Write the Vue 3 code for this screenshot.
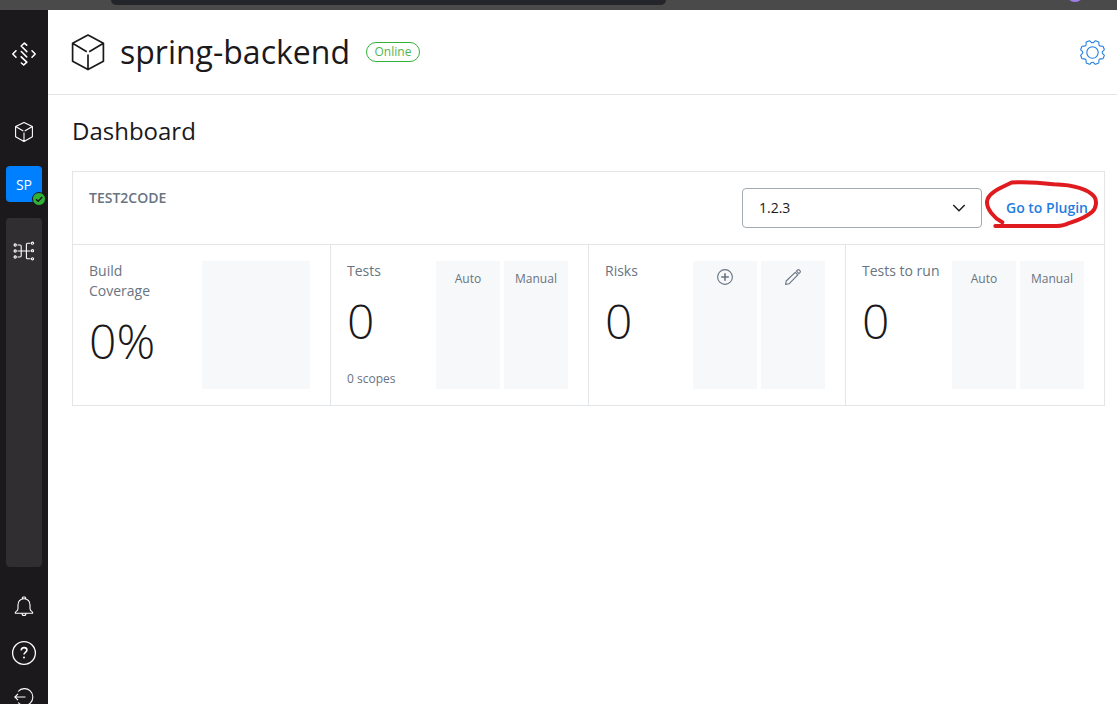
<script setup>
const polar = (r, deg) => {
  const a = (deg * Math.PI) / 180
  return `${(12.5 + r * Math.cos(a)).toFixed(2)} ${(12.5 + r * Math.sin(a)).toFixed(2)}`
}
let gear = `M${polar(12.2, 15)}`
for (let i = 0; i < 8; i++) {
  const c = i * 45 + 22.5
  gear += `L${polar(12.2, c + 8)}Q${polar(11.9, c + 12)} ${polar(10.8, c + 13.5)}`
  gear += `Q${polar(8.7, c + 22.5)} ${polar(10.8, c + 31.5)}Q${polar(11.9, c + 33)} ${polar(12.2, c + 37)}`
}
gear += 'Z'

const cards = [
  { title: 'Build Coverage', value: '0%', note: '', wide: true, bars: [''] },
  { title: 'Tests', value: '0', note: '0 scopes', bars: ['Auto', 'Manual'] },
  { title: 'Risks', value: '0', note: '', bars: ['plus', 'pencil'] },
  { title: 'Tests to run', value: '0', note: '', bars: ['Auto', 'Manual'] },
]
</script>

<template>
  <div class="screen">
    <div class="browser">
      <div class="address"></div>
      <div class="avatar"></div>
    </div>
    <div class="body">
      <aside class="sidebar">
        <svg class="logo" width="26" height="26" viewBox="0 0 26 26" fill="none" stroke="#fff" stroke-width="1.6" stroke-linecap="round" stroke-linejoin="round">
          <path d="M5 9.8 1.8 13 5 16.2M21 9.8l3.2 3.2L21 16.2" />
          <path d="M15.7 4.1 13.4 2 10.2 5l5.6 5.6M10.3 10.5l5.4 5.4M10.2 15.8l5.6 5.3L12.7 24l-2.3-2" />
        </svg>
        <svg class="nav-cube" width="20" height="22" viewBox="0 0 20 22" fill="none" stroke="#fff" stroke-width="1.1" stroke-linejoin="round">
          <path d="M10 1.4 18.4 5.6v10.2L10 20.6l-8.4-4.8V5.6zM1.6 5.6 9.3 10M18.4 5.6 10.7 10M10 11.6v9" />
        </svg>
        <div class="agent">
          SP
          <svg class="check" width="14" height="14" viewBox="0 0 14 14">
            <circle cx="7" cy="7" r="6.5" fill="#31b236" stroke="#1b191b" />
            <path d="M4 7.2 6.2 9.3 10.2 5" fill="none" stroke="#1b191b" stroke-width="1.5" />
          </svg>
        </div>
        <div class="plugins">
          <svg width="22" height="20" viewBox="0 0 22 20" fill="none" stroke="#fff" stroke-width="1.1">
            <circle cx="2.2" cy="4" r="1.1" /><circle cx="2.2" cy="10" r="1.1" /><circle cx="2.2" cy="16" r="1.1" />
            <circle cx="19.5" cy="2.2" r="1.1" /><circle cx="19.5" cy="9.7" r="1.1" /><circle cx="19.5" cy="17.8" r="1.1" />
            <path d="M4.500 4H7q1.200 0 1.200 1.200v9.600Q8.200 16 7 16H4.500M4.500 10h13M17.500 2.200h-2.800q-1.300 0-1.300 1.300v13q0 1.300 1.300 1.300h2.800" />
          </svg>
        </div>
        <svg class="bell" width="20" height="22" viewBox="0 0 20 22" fill="none" stroke="#fff" stroke-width="1.1" stroke-linejoin="round">
          <path d="M8.4 3V1.7q0-.7 1.6-.7t1.6.7V3M10 2.700C5.900 2.700 4 5.500 4 9v3.400q0 1.800-1.800 3Q1 16.300 1.300 17.300h17.400q.3-1-.9-1.900-1.800-1.200-1.800-3V9c0-3.500-1.900-6.300-6-6.300zM8 17.500q0 2 2 2t2-2" />
        </svg>
        <svg class="help" width="26" height="26" viewBox="0 0 26 26" fill="none" stroke="#fff" stroke-width="1.3">
          <circle cx="13" cy="13" r="11.4" />
          <path d="M10.2 10.4c.1-1.8 1.2-2.8 2.9-2.8 1.6 0 2.8 1 2.8 2.5 0 2.3-2.9 2.1-2.9 4.5" stroke-width="1.6" />
          <circle cx="13" cy="17.6" r="1" fill="#fff" stroke="none" />
        </svg>
        <svg class="exit" width="20" height="20" viewBox="0 0 20 20" fill="none" stroke="#fff" stroke-width="1.1">
          <path d="M4.1 4.500A8.400 8.400 0 1 1 4.100 15.500M11.500 10H.8M4 6.800.8 10 4 13.200" />
        </svg>
      </aside>

      <main class="main">
        <header class="header">
          <svg class="cube" width="34" height="38" viewBox="0 0 34 38" fill="none" stroke="#1b191b" stroke-width="1.7" stroke-linejoin="round">
            <path d="M17 2 32.4 10.3v18L17 36.6 1.6 28.3v-18zM1.6 10.3 15.8 18.7M32.4 10.3 18.2 18.7M17 21.5v15" />
          </svg>
          <h1>spring-backend</h1>
          <span class="status">Online</span>
          <svg class="gear" width="25" height="25" viewBox="0 0 25 25" fill="none" stroke="#1f7ee0" stroke-width="1.1" stroke-linejoin="round">
            <path :d="gear" />
            <circle cx="12.5" cy="12.5" r="5.7" />
          </svg>
        </header>
        <h2>Dashboard</h2>
        <section class="panel">
          <div class="panel-head">
            <div class="name">TEST2CODE</div>
            <div class="select">
              <span>1.2.3</span>
              <svg width="14" height="10" viewBox="0 0 14 10" fill="none" stroke="#1b191b" stroke-width="1.4"><path d="M1.3 2 7 7.7 12.7 2" /></svg>
            </div>
            <a class="link">Go to Plugin</a>
          </div>
          <div class="cards">
            <div v-for="c in cards" :key="c.title" class="card">
              <div class="info" :class="{ narrow: c.wide }">
                <div class="title">{{ c.title }}</div>
                <div class="value">{{ c.value }}</div>
                <div v-if="c.note" class="note">{{ c.note }}</div>
              </div>
              <div class="bars">
                <div v-for="b in c.bars" :key="b" class="bar" :class="{ wide: c.wide }">
                  <svg v-if="b === 'plus'" class="bar-icon" width="16" height="16" viewBox="0 0 16 16" fill="none" stroke="#687481">
                    <circle cx="8" cy="8" r="7.4" stroke-width="1.1" />
                    <path d="M8 4.2v7.6M4.2 8h7.6" stroke-width="1.6" />
                  </svg>
                  <svg v-else-if="b === 'pencil'" class="bar-icon" width="16" height="16" viewBox="0 0 16 16" fill="none" stroke="#687481" stroke-width="1.1" stroke-linejoin="round">
                    <path d="M.6 15.4 1.2 12 10.2 3.3 12.8 5.9 4 14.8zM11.4 2.2 12.4 1.1q1-.9 2 0l.5.5q.9 1 0 2l-1 1z" />
                  </svg>
                  <span v-else>{{ b }}</span>
                </div>
              </div>
            </div>
          </div>
        </section>
      </main>
    </div>
    <svg class="marker" width="120" height="56" viewBox="980 176 120 56" fill="none" stroke="#e01b20" stroke-width="4" stroke-linecap="round" stroke-linejoin="round">
      <path d="M1002.3 222.3C994 218 986.500 209 987 201.500C988 192 1003 187 1011.700 182.500C1031 181.500 1043 183 1054 184.300C1075 185 1088 189 1094.500 197C1097 201 1096.500 208 1092 212C1084 219 1075 221 1066 224.300C1060 226.500 1054 226 1049 226H995.300" />
    </svg>
  </div>
</template>

<style>
body { margin: 0; }
</style>

<style scoped>
* { box-sizing: border-box; }
.screen {
  position: relative;
  width: 1117px;
  height: 704px;
  overflow: hidden;
  background: #fff;
  color: #1b191b;
  font-family: "Open Sans", "Noto Sans", sans-serif;
}
.browser {
  height: 10px;
  background: #4a4a4a;
  display: flex;
  overflow: hidden;
}
.address { width: 555px; height: 5px; margin-left: 111px; background: #24252b; border-radius: 0 0 8px 8px; }
.avatar { width: 18px; height: 18px; margin: -16px 0 0 400px; border-radius: 50%; background: #a37de8; }
.body { display: flex; height: 694px; }
.sidebar {
  width: 48px;
  flex: none;
  background: #1b191b;
  display: flex;
  flex-direction: column;
  align-items: center;
  overflow: hidden;
}
.sidebar > * { flex: none; }
.logo { margin-top: 31px; }
.nav-cube { margin-top: 54px; }
.agent {
  position: relative;
  width: 36px;
  height: 36px;
  margin-top: 23px;
  border-radius: 4px;
  background: #007fff;
  color: #fff;
  font-size: 14px;
  line-height: 38px;
  text-align: center;
}
.check { position: absolute; left: 26px; top: 26px; }
.plugins {
  width: 36px;
  height: 349px;
  margin-top: 16px;
  padding-top: 23px;
  border-radius: 4px;
  background: #302e31;
  text-align: center;
  line-height: 0;
}
.bell { margin-top: 29px; }
.help { margin-top: 22px; }
.exit { margin-top: 21px; }
.main { flex: 1; min-width: 0; }
.header {
  height: 85px;
  border-bottom: 1px solid #e3e6e8;
  display: flex;
  align-items: center;
  padding: 0 12px 0 23px;
}
h1 { margin: 0 0 0 15px; font-size: 32px; line-height: 40px; font-weight: 400; white-space: nowrap; }
.status {
  width: 54px;
  height: 20px;
  margin-left: 16px;
  border: 1px solid #31b236;
  border-radius: 10px;
  color: #4fb653;
  font-size: 12px;
  line-height: 18px;
  text-align: center;
}
.gear { margin-left: auto; }
h2 { margin: 20px 0 0 24px; font-size: 24px; line-height: 32px; font-weight: 400; }
.panel { width: 1033px; height: 235px; margin: 24px 0 0 24px; border: 1px solid #e3e6e8; }
.panel-head {
  height: 73px;
  padding: 16px;
  display: flex;
  border-bottom: 1px solid #e3e6e8;
}
.name { font-size: 14px; line-height: 20px; font-weight: 600; color: #687481; }
.select {
  width: 240px;
  height: 40px;
  margin-left: auto;
  padding: 0 15px 0 16px;
  border: 1px solid #a4acb3;
  border-radius: 4px;
  display: flex;
  align-items: center;
  justify-content: space-between;
  font-size: 14px;
}
.select span { line-height: 20px; padding-bottom: 1px; }
.link { margin-left: 24px; font-size: 14px; line-height: 40px; font-weight: 600; color: #1f7ee0; white-space: nowrap; }
.cards { display: grid; grid-template-columns: 258px 258px 257px 258px; height: 160px; }
.card {
  display: flex;
  justify-content: space-between;
  padding: 16px 20px 16px 16px;
  border-right: 1px solid #e3e6e8;
}
.card:last-child { border-right: 0; }
.info { white-space: nowrap; }
.narrow { width: 70px; }
.narrow .title { white-space: normal; }
.title { font-size: 14px; line-height: 20px; color: #687481; }
.value { margin-top: 8px; font-size: 48px; line-height: 64px; font-weight: 300; }
.note { margin-top: 16px; font-size: 12px; line-height: 20px; color: #687481; }
.bars { display: flex; gap: 4px; }
.bar {
  width: 64px;
  height: 128px;
  padding-top: 8px;
  background: #f7f8fa;
  text-align: center;
  font-size: 12px;
  line-height: 20px;
  color: #687481;
}
.bar.wide { width: 108px; }
.bar-icon { display: block; margin: 0 auto; }
.marker { position: absolute; left: 980px; top: 176px; }
</style>
